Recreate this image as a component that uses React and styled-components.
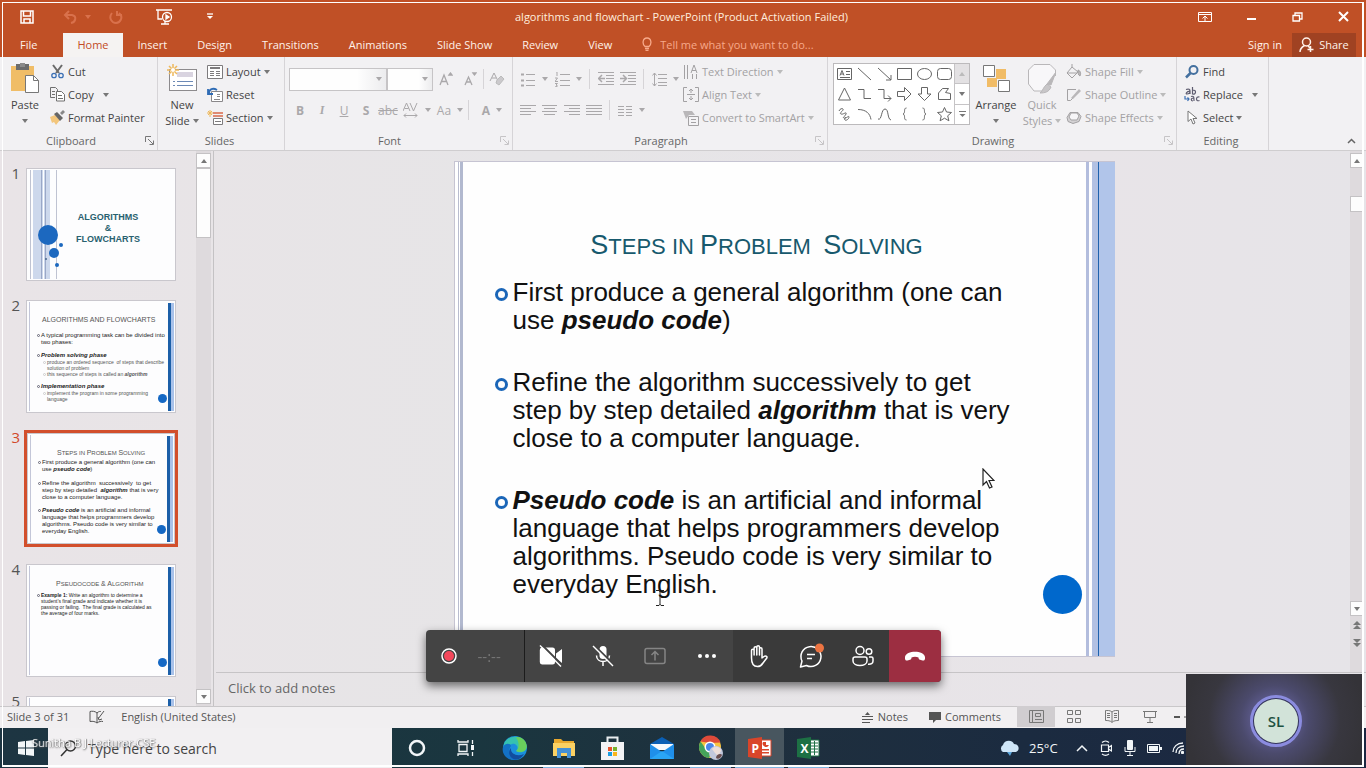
import React from "react";
import styled, { createGlobalStyle, css } from "styled-components";

const Global = createGlobalStyle`
  *, *::before, *::after { box-sizing: border-box; }
  html, body { margin: 0; height: 100%; overflow: hidden; }
  body { font-family: "Open Sans", "Noto Sans", sans-serif; font-size: 11px; color: #444; background: #e8e5e8; }
  button, input, select, textarea { font: inherit; color: inherit; margin: 0; padding: 0; border: 0; background: none; border-radius: 0; outline: 0; }
  button { white-space: nowrap; }
  svg { display: block; flex: none; }
`;

const Desktop = styled.div`
  display: flex;
  flex-direction: column;
  height: 100vh;
`;

const Ico = ({ w = 16, h = w, sw = 1, c = "currentColor", children }) => (
  <svg width={w} height={h} viewBox={`0 0 ${w} ${h}`} fill="none" stroke={c} strokeWidth={sw} aria-hidden="true">
    {children}
  </svg>
);
const Caret = ({ up }) => (
  <svg width="6" height="4" viewBox="0 0 6 4" fill="currentColor" aria-hidden="true">
    <path d={up ? "M0 4h6L3 0z" : "M0 0h6L3 4z"} />
  </svg>
);

/* ---------- title bar ---------- */

const TitleBar = styled.header`
  display: grid;
  grid-template-columns: 1fr auto 1fr;
  align-items: center;
  flex: none;
  height: 33px;
  padding: 0 17px 0 20px;
  background: #c05026;
  color: #fff;
`;
const QuickAccess = styled.div`
  display: flex;
  align-items: center;
`;
const QuickButton = styled.button`
  display: flex;
  align-items: center;
  gap: 8px;
  margin-right: ${(p) => p.$after || 0}px;
  color: ${(p) => (p.$dim ? "#d9714c" : "#fff")};
`;
const WindowButtons = styled.div`
  display: flex;
  justify-content: flex-end;
  align-items: center;
  gap: 35px;
`;
const DocTitle = styled.div`
  color: #ffeede;
  padding-right: 6px;
`;

/* ---------- tabs ---------- */

const TabBar = styled.nav`
  display: flex;
  flex: none;
  height: 24px;
  background: #c05026;
  color: #fff2ea;
  padding: 0 10px 0 5px;
`;
const Tab = styled.button`
  padding: 0 ${(p) => p.$pad || 15}px 2px;
  ${(p) =>
    p.$active &&
    css`
      background: #f5f3f2;
      color: #c34a25;
      padding: 0 14px 2px;
      margin-left: 11px;
    `}
`;
const TellMe = styled.button`
  display: flex;
  align-items: center;
  gap: 8px;
  margin-left: 15px;
  padding-bottom: 2px;
  color: #f7a98a;
`;
const Spacer = styled.div`
  flex: 1;
`;
const ShareButton = styled.button`
  display: flex;
  align-items: center;
  justify-content: center;
  gap: 4px;
  width: 64px;
  padding-bottom: 1px;
  background: #a04222;
`;

/* ---------- ribbon ---------- */

const Ribbon = styled.section`
  display: flex;
  flex: none;
  height: 94px;
  padding-left: 3px;
  background: #f2f1f3;
  border-bottom: 1px solid #cfcdcf;
`;
const GroupBox = styled.div`
  display: flex;
  flex-direction: column;
  flex: none;
  width: ${(p) => p.$w}px;
  padding-top: 3px;
  border-right: 1px solid #d6d4d7;
`;
const GroupBody = styled.div`
  display: flex;
  height: 69px;
  padding-left: ${(p) => p.$pad || 0}px;
`;
const GroupLabel = styled.div`
  display: flex;
  align-items: center;
  height: 18px;
  margin-top: 2px;
  padding-right: 3px;
  color: #666;
  span {
    flex: 1;
    padding-right: ${(p) => (p.$launcher ? 6 : 0)}px;
    text-align: center;
  }
`;
const Launcher = styled.button`
  width: 9px;
  color: ${(p) => (p.$dim ? "#c6c4c6" : "#777")};
`;
const Group = ({ w, pad, label, launcher, children }) => (
  <GroupBox $w={w}>
    <GroupBody $pad={pad}>{children}</GroupBody>
    <GroupLabel $launcher={launcher}>
      <span>{label}</span>
      {launcher && (
        <Launcher $dim={launcher === "dim"} aria-label={`${label} options`}>
          <Ico w={9}>
            <path d="M.5 6V.5H6M3 3l5 5M8.500 4.500v4h-4" />
          </Ico>
        </Launcher>
      )}
    </GroupLabel>
  </GroupBox>
);
const Stack = styled.div`
  display: flex;
  flex-direction: column;
  margin-left: ${(p) => p.$left || 0}px;
`;
const Command = styled.button`
  display: flex;
  align-items: center;
  height: 23px;
  gap: ${(p) => p.$gap || 3}px;
  color: ${(p) => (p.$dim ? "#a3a1a3" : "#444")};
`;
const CommandIcon = styled.span`
  display: flex;
  justify-content: center;
  width: 16px;
`;
const CaretBox = styled.span`
  margin-left: ${(p) => (p.$far ? 6 : 0)}px;
  color: ${(p) => (p.$dim ? "#bbb" : "#777")};
`;
const Cmd = ({ icon, text, caret, far, dim, gap }) => (
  <Command $dim={dim} $gap={gap}>
    <CommandIcon>{icon}</CommandIcon>
    {text}
    {caret && (
      <CaretBox $far={far} $dim={dim}>
        <Caret />
      </CaretBox>
    )}
  </Command>
);
const BigCommand = styled.button`
  display: flex;
  flex-direction: column;
  align-items: center;
  width: ${(p) => p.$w}px;
  line-height: 16px;
  color: ${(p) => (p.$dim ? "#a3a1a3" : "#444")};
`;
const BigIcon = styled.span`
  display: flex;
  align-items: center;
  height: 38px;
`;
const Inline = styled.span`
  display: flex;
  align-items: center;
  gap: 3px;
  height: 16px;
`;
const ToolColumn = styled.div`
  display: flex;
  flex-direction: column;
  gap: 7px;
  padding-top: 7px;
`;
const ToolRow = styled.div`
  display: flex;
  align-items: center;
  height: 24px;
  color: #aaa8aa;
`;
const Tool = styled.button`
  display: flex;
  align-items: center;
  justify-content: center;
  gap: ${(p) => (p.$caret ? 6 : 0)}px;
  width: ${(p) => p.$w || 22}px;
  font-size: 12px;
  font-weight: ${(p) => (p.$bold ? 700 : 400)};
  font-style: ${(p) => (p.$italic ? "italic" : "normal")};
  font-family: ${(p) => (p.$italic ? '"Liberation Serif", serif' : "inherit")};
  text-decoration: ${(p) => p.$deco || "none"};
`;
const ToolSep = styled.span`
  width: 1px;
  height: 20px;
  margin: 0 ${(p) => p.$m || 5}px;
  background: #d6d4d7;
`;
const Combo = styled.div`
  display: flex;
  align-items: center;
  width: ${(p) => p.$w}px;
  height: 23px;
  padding-right: 4px;
  background: linear-gradient(90deg, #fefefe 70%, #ececee);
  border: 1px solid #c6c4c6;
  select {
    flex: 1;
    min-width: 0;
    height: 21px;
    appearance: none;
  }
`;
const Gallery = styled.div`
  display: flex;
  width: 137px;
  height: 62px;
  margin-top: 3px;
  background: #fff;
  border: 1px solid #bcbabc;
`;
const ShapeGrid = styled.div`
  display: grid;
  grid-template-columns: repeat(6, 20px);
  grid-template-rows: repeat(3, 20px);
  flex: 1;
`;
const ShapeCell = styled.button`
  display: grid;
  place-items: center;
  color: #666;
`;
const GalleryScroll = styled.div`
  display: flex;
  flex-direction: column;
  width: 15px;
  border-left: 1px solid #c6c4c6;
  button {
    display: grid;
    place-items: center;
    flex: 1;
    color: #777;
  }
  button + button {
    border-top: 1px solid #c6c4c6;
  }
  button:first-child {
    background: #e3e1e3;
    color: #bbb;
  }
`;
const CollapseArea = styled.div`
  display: flex;
  flex: 1;
  justify-content: flex-end;
  align-items: flex-end;
  padding: 0 10px 6px 0;
  color: #666;
`;

/* ---------- workspace ---------- */

const Workspace = styled.main`
  display: flex;
  flex: 1;
  min-height: 0;
  background: linear-gradient(90deg, #e9e4e7, #e6e5e7 40%, #e8e4e8 80%, #e6e4e8);
`;
const ThumbPane = styled.aside`
  display: flex;
  flex: none;
  width: 214px;
  padding-left: 3px;
  border-right: 1px solid #c4c2c4;
`;
const ThumbList = styled.ol`
  flex: 1;
  display: flex;
  flex-direction: column;
  gap: 15px;
  margin: 0;
  padding: 15px 0 0 6px;
  list-style: none;
  overflow: hidden;
`;
const ThumbItem = styled.li`
  display: flex;
  flex: none;
  gap: 4px;
`;
const ThumbNumber = styled.span`
  width: 11px;
  text-align: right;
  font-size: 15px;
  line-height: 15px;
  color: ${(p) => (p.$active ? "#d2492a" : "#555")};
`;
const ThumbFrame = styled.button`
  width: 154px;
  height: 117px;
  padding: ${(p) => (p.$active ? 0 : 1)}px;
  border: ${(p) => (p.$active ? "3px solid #d24f2c" : "1px solid transparent")};
`;
const Thumb = styled.span`
  display: flex;
  width: 100%;
  height: 100%;
  background: #fdfdfe;
  border: 1px solid #c9c7cd;
  font-family: "Liberation Sans", Arial, sans-serif;
  color: #222;
  text-align: left;
  white-space: nowrap;
`;
const ThumbEdge = styled.span`
  width: 3px;
  margin: 1px 0;
  border-right: 1px solid #c3c6d8;
`;
const ThumbBody = styled.span`
  display: flex;
  flex-direction: column;
  flex: 1;
  min-width: 0;
  padding: ${(p) => p.$top}px 0 0 7px;
`;
const ThumbStripe = styled.span`
  width: 6px;
  margin: 2px 1px 1px 0;
  background: #a9c2ea;
  border-left: 3px solid #1c5fa8;
`;
const ThumbTitle = styled.span`
  font-size: 7px;
  line-height: 8px;
  margin: 0 0 ${(p) => p.$after || 5}px ${(p) => p.$indent || 5}px;
  color: #555;
  small {
    font-size: 6px;
  }
`;
const ThumbPara = styled.span`
  display: flex;
  gap: 1px;
  margin: 0 0 ${(p) => p.$after || 0}px ${(p) => (p.$sub ? 6 : 0)}px;
  font-size: ${(p) => (p.$small ? 5 : 6)}px;
  line-height: ${(p) => (p.$small ? 6 : 7)}px;
  color: ${(p) => (p.$sub ? "#555" : "#222")};
  white-space: pre;
  &::before {
    content: "";
    flex: none;
    width: 3px;
    height: 3px;
    margin-top: 2px;
    border: 1px solid ${(p) => (p.$sub ? "#ccc" : "#667")};
    border-radius: 50%;
  }
`;
const ThumbDot = styled.span`
  display: flex;
  align-items: flex-end;
  padding: 0 1px 9px 0;
  &::after {
    content: "";
    width: 9px;
    height: 9px;
    border-radius: 50%;
    background: #1568c4;
  }
`;
const CoverText = styled.span`
  flex: 1;
  align-self: center;
  display: flex;
  flex-direction: column;
  align-items: center;
  padding: 8px 30px 0 8px;
  font-size: 9px;
  line-height: 11px;
  font-weight: 700;
  color: #28616f;
`;
const ScrollTrack = styled.div`
  display: flex;
  flex-direction: column;
  align-items: center;
  flex: none;
  width: ${(p) => p.$w}px;
  margin-right: ${(p) => p.$right || 0}px;
  padding: 2px 0 ${(p) => p.$bottom || 2}px;
  background: #dedadd;
  color: #777;
`;
const ScrollButton = styled.button`
  display: grid;
  place-items: center;
  width: 100%;
  height: ${(p) => p.$h || 15}px;
  ${(p) =>
    !p.$plain &&
    css`
      background: #fdfdfd;
      border: 1px solid #c4c2c4;
    `}
`;
const ScrollThumb = styled.div`
  width: 100%;
  height: ${(p) => p.$h}px;
  margin-top: ${(p) => p.$top || 0}px;
  background: #fdfdfd;
  border: 1px solid #c4c2c4;
`;
const Editor = styled.section`
  display: flex;
  flex-direction: column;
  flex: 1;
  min-width: 0;
  margin-left: 2px;
`;
const CanvasRow = styled.div`
  display: flex;
  flex: 1;
  min-height: 0;
`;
const Canvas = styled.div`
  flex: 1;
  display: flex;
  justify-content: center;
  align-items: flex-start;
  padding: 10px 0 0 2px;
`;
const Slide = styled.article`
  display: flex;
  width: 661px;
  aspect-ratio: 4 / 3;
  background: #fefefe;
  border: 1px solid #c6c4d2;
  border-right: 0;
  font-family: "Liberation Sans", Arial, sans-serif;
  color: #111;
`;
const SlideEdge = styled.div`
  width: 8px;
  border-right: 3px solid #b2b9cf;
  background: linear-gradient(90deg, #fff 3px, #b9bdcf 3px, #b9bdcf 4px, #fff 4px);
`;
const SlideBody = styled.div`
  display: flex;
  flex-direction: column;
  flex: 1;
  padding: 67px 0 0 32px;
`;
const SlideTitle = styled.h1`
  margin: 0 24px 15px 0;
  text-align: center;
  font-size: 27px;
  line-height: 32px;
  font-weight: 400;
  color: #17596d;
  white-space: pre;
  small {
    font-size: 22px;
  }
`;
const Bullets = styled.ul`
  display: flex;
  flex-direction: column;
  gap: 34px;
  margin: 0;
  padding: 0;
  list-style: none;
`;
const Bullet = styled.li`
  display: flex;
  gap: 5px;
  font-size: 26px;
  line-height: 28px;
  white-space: nowrap;
  &::before {
    content: "";
    flex: none;
    width: 13px;
    height: 13px;
    margin-top: 10px;
    border: 3px solid #1b66b8;
    border-radius: 50%;
  }
`;
const DotColumn = styled.div`
  display: flex;
  align-items: flex-end;
  padding: 0 4px 42px 0;
  &::after {
    content: "";
    width: 39px;
    height: 39px;
    border-radius: 50%;
    background: #0068cc;
  }
`;
const SlideStripes = styled.div`
  display: flex;
  width: 29px;
  background: #fff;
  span:nth-child(1) { width: 3px; background: #b3bddd; margin-right: 3px; }
  span:nth-child(2) { width: 6px; background: #b2c1e3; }
  span:nth-child(3) { width: 1px; background: #1e62ae; }
  span:nth-child(4) { flex: 1; background: #b1c5ea; }
`;
const Notes = styled.textarea`
  flex: none;
  height: 34px;
  padding: 6px 12px;
  border-top: 1px solid #c6c4c6;
  font-size: 13px;
  line-height: 18px;
  resize: none;
  &::placeholder {
    color: #666;
    opacity: 1;
  }
`;

/* ---------- status bar ---------- */

const StatusBar = styled.footer`
  display: flex;
  align-items: center;
  flex: none;
  height: 22px;
  padding: 0 0 2px 7px;
  background: #f1eff1;
  border-top: 1px solid #c9c7c9;
  color: #555;
`;
const StatusItem = styled.button`
  display: flex;
  align-items: center;
  gap: ${(p) => p.$gap || 3}px;
  margin-right: ${(p) => p.$after || 0}px;
`;
const ViewButton = styled.button`
  display: grid;
  place-items: center;
  width: 38px;
  height: 21px;
  color: #777;
  background: ${(p) => (p.$active ? "#d0cdd0" : "none")};
`;
const TileSpace = styled.div`
  width: 180px;
`;

/* ---------- taskbar ---------- */

const Taskbar = styled.nav`
  display: flex;
  align-items: center;
  flex: none;
  height: 40px;
  padding-left: 3px;
  background: linear-gradient(90deg, #1d3542, #1a363f 35%, #1f303e 55%, #1b2b40 75%, #1c2742);
  color: #f2f6f8;
`;
const StartButton = styled.button`
  display: grid;
  place-items: center;
  width: 45px;
  height: 100%;
`;
const SearchBox = styled.label`
  display: flex;
  align-items: center;
  gap: 11px;
  width: 344px;
  height: 100%;
  padding-left: 12px;
  background: #f2f0f2;
  color: #333;
  font-size: 14px;
  input {
    flex: 1;
    min-width: 0;
  }
  input::placeholder {
    color: #444;
    opacity: 1;
  }
`;
const TaskButton = styled.button`
  display: grid;
  place-items: center;
  width: 49px;
  height: 40px;
  background-color: ${(p) => (p.$active ? "#48565f" : "transparent")};
  ${(p) =>
    p.$open &&
    css`
      background-image: linear-gradient(#7fb4e0, #7fb4e0);
      background-repeat: no-repeat;
      background-position: center bottom;
      background-size: ${p.$active ? 49 : 41}px 2px;
    `}
`;
const Tray = styled.div`
  display: flex;
  align-items: center;
  gap: 8px;
`;
const TrayIcon = styled.button`
  display: grid;
  place-items: center;
  width: ${(p) => p.$w || 16}px;
`;
const Temperature = styled.span`
  width: 37px;
  font-size: 13px;
`;

/* ---------- overlays ---------- */

const ShareFrame = styled.div`
  position: fixed;
  inset: 2px 2px 1px;
  border: 2px solid #fff;
  border-top-width: 1px;
  border-left-width: 1px;
  pointer-events: none;
`;
const MeetingDock = styled.div`
  position: fixed;
  left: 0;
  right: 0;
  bottom: 86px;
  display: flex;
  justify-content: center;
  pointer-events: none;
`;
const MeetingBar = styled.div`
  display: flex;
  height: 52px;
  border-radius: 4px;
  overflow: hidden;
  background: #444;
  color: #fff;
  box-shadow: 0 4px 10px rgba(0, 0, 0, 0.55);
  pointer-events: auto;
`;
const RecordStatus = styled.div`
  display: flex;
  align-items: center;
  gap: 21px;
  width: 99px;
  padding-left: 15px;
  border-right: 1px solid #1c1c1c;
  color: #777;
  font-size: 15px;
`;
const MeetingButton = styled.button`
  display: grid;
  place-items: center;
  width: 52px;
  background: ${(p) => ({ dark: "#3a3a3a", leave: "#9c2e41" })[p.$tone] || "#444"};
  color: ${(p) => (p.$dim ? "#858585" : "#fff")};
`;
const SelfTile = styled.div`
  position: fixed;
  right: 3px;
  bottom: 3px;
  display: grid;
  place-items: center;
  width: 177px;
  height: 91px;
  padding: 2px 0 0 3px;
  background: radial-gradient(circle at center, #5a5888 22px, #4b4a6c 34px, #38373f 66px, #343338 90px);
`;
const Avatar = styled.div`
  display: grid;
  place-items: center;
  width: 52px;
  height: 52px;
  border: 3px solid #8b8cdf;
  border-radius: 50%;
  background: #34345a;
  span {
    display: grid;
    place-items: center;
    width: 44px;
    height: 44px;
    border-radius: 50%;
    background: #d2e3d9;
    color: #1d5140;
    font-size: 15px;
    font-weight: 600;
  }
`;
const PresenterName = styled.div`
  position: fixed;
  left: 32px;
  bottom: 17px;
  line-height: 16px;
  color: #fff;
  opacity: 0.85;
  text-shadow: 0 1px 2px #555, 1px 0 1px #777;
  pointer-events: none;
`;
const Pointer = styled.div`
  position: fixed;
  left: ${(p) => p.$x}px;
  top: ${(p) => p.$y}px;
  pointer-events: none;
`;

/* ---------- ribbon drawings ---------- */

const lines = (xs, w, ys) => ys.map((y, i) => `M${xs[i % xs.length]} ${y}h${w[i % w.length]}`).join("");
const SHAPES = [
  ["Text box", <><path d="M.5 1.500h14v11h-14zM9 4.500h4M9 7.500h4M3 10.500h10" /><path d="M3 8.500l2-5 2 5M4 7h2.500" /></>],
  ["Line", <path d="M1 1l13 12" />],
  ["Arrow", <path d="M1 1l13 12M14 8v5H9" />],
  ["Rectangle", <path d="M.5 1.500h14v11h-14z" />],
  ["Oval", <ellipse cx="7.5" cy="7" rx="7" ry="5.500" />],
  ["Rounded rectangle", <rect x=".5" y="1.500" width="14" height="11" rx="3" />],
  ["Triangle", <path d="M7.500 1l6 12h-12z" />],
  ["Elbow connector", <path d="M1 2.500h6v9h7" />],
  ["Elbow arrow", <path d="M1 2.500h6v9h7M11 8.500l3 3-3 3" />],
  ["Right arrow", <path d="M.5 4.500h7v-4L14 7l-6.500 6.500v-4h-7z" />],
  ["Down arrow", <path d="M4.500.5h6V7H14l-6.500 6.500L1 7h3.500z" />],
  ["Freeform", <path d="M1.500 12.500V6l4-4.500h6l-3 4 5 1v6z" />],
  ["Scribble", <path d="M2 4c1-3 5-3 4-1S2 6 4 7s6-3 5 0-4 3-2 4 5-3 5-1-3 4-4 3 0-2 1-3" />],
  ["Arc", <path d="M1 2.500c8 0 12 4 13 10" />],
  ["Curve", <path d="M1 12C5 14 4 2 8 2s2 10 6 11" />],
  ["Left brace", <path d="M9.500 1C6 1 9 6 6 7c3 1 0 6 3.500 6" />],
  ["Right brace", <path d="M5.500 1C9 1 6 6 9 7c-3 1 0 6-3.500 6" />],
  ["Star", <path d="M7.500.5l2 4.500 5 .5-3.800 3.300 1.200 5-4.400-2.600-4.400 2.600 1.200-5L.5 5.500l5-.5z" />],
];

const ClipboardGroup = () => (
  <Group w={155} label="Clipboard" launcher="on">
    <BigCommand $w={44}>
      <BigIcon>
        <svg width="29" height="31" viewBox="0 0 29 31" aria-hidden="true">
          <path d="M0 3h23v25H0z" fill="#f0bd67" />
          <path d="M5 1h13v6H5z" fill="#6b6b6b" />
          <path d="M9 0h5v4H9z" fill="#8a8a8a" />
          <path d="M14.500 12.500h8l5 5v12h-13z" fill="#fff" stroke="#777" />
          <path d="M22.500 12.500v5h5" fill="none" stroke="#777" />
        </svg>
      </BigIcon>
      Paste
      <Inline><CaretBox><Caret /></CaretBox></Inline>
    </BigCommand>
    <Stack $left={2}>
      <Cmd text="Cut" icon={
        <Ico w={15} sw={2} c="#6a6a6a">
          <path d="M3 1l6 8M12 1L6 9" />
          <circle cx="4" cy="11.500" r="2.200" stroke="#3c70b5" strokeWidth="1.300" />
          <circle cx="11" cy="11.500" r="2.200" stroke="#3c70b5" strokeWidth="1.300" />
        </Ico>} />
      <Cmd text="Copy" caret far icon={
        <Ico w={15} c="#6f6f6f">
          <path d="M5 10.500H.5v-10h5l2 2v2M2 4.500h3M2 7.500h3" />
          <path d="M6.500 4.500h5l3 3v6.500h-8zM8 8.500h4M8 11.500h5" fill="#fff" />
        </Ico>} />
      <Cmd text="Format Painter" icon={
        <svg width="15" height="15" viewBox="0 0 15 15" aria-hidden="true">
          <path d="M0 7l5-2 5 5-4 5-2-3-2 1z" fill="#f3c67c" />
          <path d="M4 4l3-2 6 6-3 3z" fill="#666" />
          <path d="M10 3l3-3 2 2-3 3z" fill="#888" />
        </svg>} />
    </Stack>
  </Group>
);

const SlidesGroup = () => (
  <Group w={127} label="Slides">
    <BigCommand $w={48}>
      <BigIcon>
        <svg width="31" height="29" viewBox="0 0 31 29" aria-hidden="true">
          <rect x="2.500" y="5.500" width="27" height="21" fill="#fff" stroke="#8d8b8d" />
          <path d="M10 8h16v5H10z" fill="#d9d4e0" />
          <path d="M6 17.500h2m2 0h16M6 21.500h2m2 0h16" stroke="#6c89b5" />
          <path d="M6 0v12M0 6h12M2 2l8 8M10 2l-8 8" stroke="#eeb85b" strokeWidth="1.500" />
          <circle cx="6" cy="6" r="2" fill="#fff" />
        </svg>
      </BigIcon>
      New
      <Inline>Slide <CaretBox><Caret /></CaretBox></Inline>
    </BigCommand>
    <Stack $left={1}>
      <Cmd text="Layout" caret icon={
        <Ico w={16} c="#7d7b7d">
          <path d="M.5 1.500h15v13H.5z" fill="#fff" />
          <path d="M3 4h10" strokeWidth="2" />
          <path d="M3 7.500h4M3 9.500h4M3 11.500h4M9 7.500h4M9 9.500h4M9 11.500h4" />
        </Ico>} />
      <Cmd text="Reset" icon={
        <Ico w={16} c="#8a888a">
          <path d="M4.500 4.500h11v10h-11zM10 7.500h3M10 9.500h3M7 12.500h6" fill="#fff" />
          <path d="M2 6C2 2 6 .5 10 3M1 2v5h5" stroke="#2f6cb5" strokeWidth="1.800" />
        </Ico>} />
      <Cmd text="Section" caret icon={
        <Ico w={16} c="#7d7b7d">
          <path d="M6.500 8.500h9v6h-9zM8 11.500h6" fill="#fff" />
          <path d="M6 3h10M6 6h10" stroke="#d9684a" strokeWidth="1.500" />
          <path d="M3 0v7M0 3h6M1 1l4 4M5 1L1 5" stroke="#eeb85b" />
        </Ico>} />
    </Stack>
  </Group>
);

const FontGroup = () => (
  <Group w={228} pad={4} label="Font" launcher="dim">
    <ToolColumn>
      <ToolRow>
        <Combo $w={98}>
          <select aria-label="Font"><option /></select>
          <Caret />
        </Combo>
        <Combo $w={46}>
          <select aria-label="Font size"><option /></select>
          <Caret />
        </Combo>
        <Tool $w={26} aria-label="Increase font size">
          <Ico w={14} sw={1.300}><path d="M1 13L5 3l4 10M2.500 9.500h5" /><path d="M10 3l1.500-2L13 3z" fill="currentColor" /></Ico>
        </Tool>
        <Tool aria-label="Decrease font size">
          <Ico w={14} sw={1.300}><path d="M2 13l3.500-8L9 13M3.500 10h4" /><path d="M10 1l1.500 2L13 1z" fill="currentColor" /></Ico>
        </Tool>
        <ToolSep $m={2} />
        <Tool aria-label="Clear formatting">
          <Ico w={16}><path d="M1 10l4-8 4 8M3 7h4" /><path d="M8 9l4-4 3 3-5 6-3-2z" fill="#cbc9cc" stroke="#bbb" /></Ico>
        </Tool>
      </ToolRow>
      <ToolRow>
        <Tool $bold>B</Tool>
        <Tool $italic $bold>I</Tool>
        <Tool $deco="underline">U</Tool>
        <Tool $bold>S</Tool>
        <Tool $deco="line-through">abc</Tool>
        <Tool $w={35} $caret aria-label="Character spacing">
          <Ico w={16} h={16}><path d="M0 9l3.500-8L7 9M1.500 6.500h4M7 1l3.500 8L14 1M1 13.500h13M3 11.500l-2 2 2 2M12 11.500l2 2-2 2" /></Ico>
          <Caret />
        </Tool>
        <Tool $w={32} $caret>Aa<Caret /></Tool>
        <ToolSep $m={2} />
        <Tool $w={42} $caret $bold>A<Caret /></Tool>
      </ToolRow>
    </ToolColumn>
  </Group>
);

const ParagraphGroup = () => (
  <Group w={315} pad={4} label="Paragraph" launcher="dim">
    <ToolColumn>
      <ToolRow>
        <Tool $w={34} $caret aria-label="Bullets">
          <Ico w={15}><path d={lines([5], [9], [2.5, 8.5, 13.5])} /><path d={lines([0], [3], [2.5, 8.5, 13.5])} strokeWidth="2" /></Ico><Caret />
        </Tool>
        <Tool $w={34} $caret aria-label="Numbering">
          <Ico w={15}><path d={lines([5], [10], [2.5, 8.5, 13.5])} /><path d="M1 0l1-.5V4M0 6h2.500L0 9.500h3M0 11.500h2.500L1 13l1.500 1L0 15" /></Ico><Caret />
        </Tool>
        <ToolSep $m={4} />
        <Tool $w={24} aria-label="Decrease indent"><Ico w={16}><path d={lines([0, 8, 8, 8, 0], [16, 8, 8, 8, 16], [1.5, 4.5, 7.5, 10.5, 13.5])} /><path d="M7 7.500H1M4 4L.5 7.500 4 11" strokeWidth="1.500" /></Ico></Tool>
        <Tool $w={20} aria-label="Increase indent"><Ico w={16}><path d={lines([0, 8, 8, 8, 0], [16, 8, 8, 8, 16], [1.5, 4.5, 7.5, 10.5, 13.5])} /><path d="M0 7.500h6M3 4l3.500 3.500L3 11" strokeWidth="1.500" /></Ico></Tool>
        <ToolSep $m={5} />
        <Tool $w={32} $caret aria-label="Line spacing"><Ico w={15}><path d={lines([6], [9], [2.5, 6.5, 10.5, 13.5])} /><path d="M2.500 1v13M.5 3.500l2-2.500 2 2.500M.5 11.500l2 2.500 2-2.500" /></Ico><Caret /></Tool>
      </ToolRow>
      <ToolRow>
        {[["left", [0, 0], [16, 11]], ["center", [0, 2], [15, 11]], ["right", [0, 5], [16, 11]], ["justify", [0], [16]]].map(([n, xs, w]) => (
          <Tool key={n} aria-label={`Align ${n}`}><Ico w={16}><path d={lines(xs, w, [3.5, 6.5, 9.5, 12.5])} /></Ico></Tool>
        ))}
        <ToolSep $m={4} />
        <Tool $w={34} $caret aria-label="Columns"><Ico w={15}><path d={lines([0], [6], [3.5, 6.5, 9.5, 12.5]) + lines([8], [6], [3.5, 6.5, 9.5, 12.5])} /></Ico><Caret /></Tool>
      </ToolRow>
    </ToolColumn>
    <Stack $left={2}>
      <Cmd dim caret text="Text Direction" icon={<Ico w={16}><path d="M1.500 1v14M4.500 1v14M9.500 10v5M13.500 10v5M8 9l3-8 3 8M9 6.500h4" /></Ico>} />
      <Cmd dim caret text="Align Text" icon={<Ico w={16}><path d="M4 .5H.5v14H4M12 .5h3.500v14H12M8 2v4M6 4l2-2 2 2M4 7.500h8M8 9v4M6 11l2 2 2-2" /></Ico>} />
      <Cmd dim caret text="Convert to SmartArt" icon={<Ico w={16}><path d="M0 1h9l3 4H6L3 9z" fill="#b9b7b9" stroke="none" /><path d="M5.500 6.500h10v9h-10zM8 9.500h5M8 12.500h5" fill="#f4f3f5" /></Ico>} />
    </Stack>
  </Group>
);

const DrawingGroup = () => (
  <Group w={349} pad={5} label="Drawing" launcher="dim">
    <Gallery>
      <ShapeGrid>
        {SHAPES.map(([name, art]) => (
          <ShapeCell key={name} aria-label={name}><Ico w={15} h={15}>{art}</Ico></ShapeCell>
        ))}
      </ShapeGrid>
      <GalleryScroll>
        <button aria-label="Previous shapes"><Caret up /></button>
        <button aria-label="Next shapes"><Caret /></button>
        <button aria-label="More shapes"><Ico w={7} h={7}><path d="M0 .5h7" /><path d="M.5 3h6L3.500 6z" fill="currentColor" stroke="none" /></Ico></button>
      </GalleryScroll>
    </Gallery>
    <BigCommand $w={52}>
      <BigIcon>
        <Ico w={27} c="#777">
          <path d="M13 4h10v10h-9v8H4v-9h9z" fill="#f1bc66" stroke="none" />
          <path d="M.5.5h11v11H.5zM15.500 15.500h11v11h-11z" fill="#fff" />
        </Ico>
      </BigIcon>
      Arrange
      <Inline><CaretBox><Caret /></CaretBox></Inline>
    </BigCommand>
    <BigCommand $w={40} $dim>
      <BigIcon>
        <Ico w={28} h={30} c="#b9b7b9">
          <path d="M14 27H6L.5 20V6L6 .5h16L27.500 6v6" fill="#f8f7f9" />
          <path d="M28 8l-5 13-4-1z" fill="#b9b7b9" />
          <path d="M19 20l4 3c-2 5-6 6-11 6 3-2 3-6 7-9z" fill="#c8c6c8" />
        </Ico>
      </BigIcon>
      Quick
      <Inline>Styles <CaretBox $dim><Caret /></CaretBox></Inline>
    </BigCommand>
    <Stack $left={4}>
      <Cmd dim caret text="Shape Fill" icon={<Ico w={16}><path d="M6 3l6 5-6 6-5-5zM6 3V0M1 9h10" /><path d="M12 6c3 1 3 4 2 6-2-1-2-3-2-6z" fill="#b9b7b9" /></Ico>} />
      <Cmd dim caret text="Shape Outline" icon={<Ico w={16}><path d="M10 2.500H1.500v11h3l8-8" /><path d="M5 11l8-9 2 2-8 8z" fill="#b9b7b9" stroke="none" /></Ico>} />
      <Cmd dim caret text="Shape Effects" icon={<Ico w={16}><path d="M4 2.500h8l3 4-2 5-6 2-5-2-1-4z" fill="#d3d1d3" /><path d="M5 3h6l2 3-2 4-6 0-2-3z" fill="#f6f5f7" /></Ico>} />
    </Stack>
  </Group>
);

const EditingGroup = () => (
  <Group w={92} pad={7} label="Editing">
    <Stack>
      <Cmd text="Find" icon={<Ico w={14} sw={2} c="#44709f"><circle cx="8.500" cy="5" r="4" /><path d="M5.500 8L1 12.500" strokeWidth="2.500" /></Ico>} />
      <Cmd text="Replace" caret far icon={<Ico w={16} sw={1.200} c="#5f5d70"><path d="M2 2.500c3-1 4 0 4 1.500v3M6 4.500C3 4 1 7 3 7s3-1 3-2M8.500 0v7c4 1 4-5 0-3.500" /><path d="M1 9v3h4M3.500 10.500L5 12l-1.500 2" stroke="#3c70b5" /><path d="M7 9.500c3-1 3 1 3 4.500M10 11c-4 0-3 3-1 3M15.500 10c-4-1-4 5 0 3.500" /></Ico>} />
      <Cmd text="Select" caret icon={<Ico w={11} h={15} c="#777"><path d="M1 1v10.500L4 9l2 5 2-1-2-4.500h4z" fill="#fff" /></Ico>} />
    </Stack>
  </Group>
);

/* ---------- thumbnails ---------- */

const CoverThumb = () => (
  <Thumb>
    <svg width="36" height="111" viewBox="0 0 36 111" aria-hidden="true">
      <path d="M3.500 1v109M29.500 1v109" stroke="#bfc3d2" />
      <path d="M6 1h17v109H6z" fill="#cdd8ec" />
      <path d="M14.500 1v109M18.500 1v109" stroke="#9aa7c6" />
      <path d="M16.500 1v109" stroke="#fff" />
      <circle cx="21" cy="66" r="10" fill="#1c68bf" />
      <circle cx="27" cy="84" r="5" fill="#1c68bf" />
      <circle cx="34" cy="76" r="2" fill="#1c68bf" />
      <circle cx="30" cy="96" r="2" fill="#1c68bf" />
      <circle cx="19" cy="90" r="1" fill="#46678c" />
    </svg>
    <CoverText>
      <span>ALGORITHMS</span>
      <span>&amp;</span>
      <span>FLOWCHARTS</span>
    </CoverText>
  </Thumb>
);
const SlideThumb = ({ top, children }) => (
  <Thumb>
    <ThumbEdge />
    <ThumbBody $top={top}>{children}</ThumbBody>
    <ThumbDot />
    <ThumbStripe />
  </Thumb>
);
const THUMBS = [
  <CoverThumb />,
  <SlideThumb top={15}>
    <ThumbTitle $after={8}>ALGORITHMS AND FLOWCHARTS</ThumbTitle>
    <ThumbPara $after={6}>{"A typical programming task can be divided into\ntwo phases:"}</ThumbPara>
    <ThumbPara><b><i>Problem solving phase</i></b></ThumbPara>
    <ThumbPara $sub $small>{"produce an ordered sequence  of steps that describe\nsolution of problem"}</ThumbPara>
    <ThumbPara $sub $small $after={6}><span>this sequence of steps is called an <b><i>algorithm</i></b></span></ThumbPara>
    <ThumbPara><b><i>Implementation phase</i></b></ThumbPara>
    <ThumbPara $sub $small>{"implement the program in some programming\nlanguage"}</ThumbPara>
  </SlideThumb>,
  <SlideThumb top={15}>
    <ThumbTitle $indent={19} $after={2}>S<small>TEPS IN </small>P<small>ROBLEM </small>S<small>OLVING</small></ThumbTitle>
    <ThumbPara $after={7}><span>{"First produce a general algorithm (one can\nuse "}<b><i>pseudo code</i></b>)</span></ThumbPara>
    <ThumbPara $after={6}><span>{"Refine the algorithm  successively  to get\nstep by step detailed  "}<b><i>algorithm</i></b>{" that is very\nclose to a computer language."}</span></ThumbPara>
    <ThumbPara><span><b><i>Pseudo code</i></b>{" is an artificial and informal\nlanguage that helps programmers develop\nalgorithms. Pseudo code is very similar to\neveryday English."}</span></ThumbPara>
  </SlideThumb>,
  <SlideThumb top={15}>
    <ThumbTitle $indent={19} $after={4}>P<small>SEUDOCODE </small>&amp; A<small>LGORITHM</small></ThumbTitle>
    <ThumbPara $small><span><b>Example 1:</b>{" Write an algorithm to determine a\nstudent’s final grade and indicate whether it is\npassing or failing.  The final grade is calculated as\nthe average of four marks."}</span></ThumbPara>
  </SlideThumb>,
  <SlideThumb top={15} />,
];

const TABS = ["Insert", "Design", "Transitions", "Animations", "Slide Show", "Review", "View"];

const TASKS = [
  { name: "Cortana", art: <Ico w={18} sw={2.5}><circle cx="9" cy="9" r="7" /></Ico> },
  { name: "Task View", art: <Ico w={18} sw={1.3}><path d="M1 1v2h10V1M1 17v-2h10v2M2 5.500h8v7H2zM15.500 1v4M15.500 13v4" /><path d="M14 6h3v5h-3z" fill="currentColor" stroke="none" /></Ico> },
  { name: "Microsoft Edge", art: (
    <svg width="26" height="26" viewBox="0 0 26 26" aria-hidden="true">
      <circle cx="13" cy="13" r="12" fill="#1b8fdc" />
      <path d="M2 9C5 0 20-1 24 9c3 8-6 10-10 7 4-3 0-8-4-7S3 12 1.500 14z" fill="#35c2b0" />
      <path d="M14 2c7-1 12 6 10.500 11-1 4-7 5-10.500 3 4-3 3-9 0-14z" fill="#69cf5c" />
      <path d="M9 11c-4 5 0 12 6 13.500C6 27-1 19 1 12c2-4 7-4 8-1z" fill="#1371c4" />
      <path d="M9 13c-1 6 6 9 13 6-3 5-7 6-9 5.500-5-1-8-7-4-11.500z" fill="#124c9e" />
    </svg>) },
  { name: "File Explorer", open: true, art: (
    <svg width="22" height="20" viewBox="0 0 22 20" aria-hidden="true">
      <path d="M1 1h7l2 2h11v15H1z" fill="#e9a92e" />
      <path d="M0 5h22v13H0z" fill="#fbd163" />
      <path d="M4 10h14v10h-4v-5H8v5H4z" fill="#4490d6" />
    </svg>) },
  { name: "Microsoft Store", art: (
    <svg width="23" height="25" viewBox="0 0 23 25" aria-hidden="true">
      <path d="M6.500 8V1.500h10V8" fill="none" stroke="#e9edf0" strokeWidth="2" />
      <path d="M0 6h23v18H0z" fill="#f3f3f5" />
      <path d="M7 11h4v4H7z" fill="#e8532b" /><path d="M12 11h4v4h-4z" fill="#77b32c" />
      <path d="M7 16h4v4H7z" fill="#1b9de2" /><path d="M12 16h4v4h-4z" fill="#f9b51b" />
    </svg>) },
  { name: "Mail", art: (
    <svg width="24" height="24" viewBox="0 0 24 24" aria-hidden="true">
      <path d="M0 8l12-7 12 7v4H0z" fill="#0a5fb5" />
      <path d="M1 8h22v6H1z" fill="#f4f8fc" />
      <path d="M0 8l12 8 12-8v15H0z" fill="#1f8fea" />
      <path d="M0 23l12-8 12 8z" fill="#2aa5f5" />
    </svg>) },
  { name: "Google Chrome", open: true, art: (
    <svg width="26" height="26" viewBox="0 0 26 26" aria-hidden="true">
      <circle cx="12" cy="12" r="11" fill="#f6c340" />
      <path d="M2.500 6.500a11 11 0 0 1 20 1L12 8z" fill="#de4a3a" />
      <path d="M2.500 6.500A11 11 0 0 0 11 23l4-8-7-1z" fill="#44a35a" />
      <circle cx="12" cy="12" r="5.500" fill="#fff" /><circle cx="12" cy="12" r="4" fill="#4b86e8" />
      <circle cx="18" cy="18" r="7" fill="#c2c8dc" />
      <path d="M14 14c3-4 9-2 9 2l-3 5-3-3z" fill="#ecdeda" /><path d="M18 23c0-4 5-5 6-3-1 3-4 5-6 3z" fill="#6a4f50" />
    </svg>) },
  { name: "PowerPoint", open: true, active: true, art: (
    <svg width="24" height="22" viewBox="0 0 24 22" aria-hidden="true">
      <path d="M11 3h12v16H11z" fill="#fff" stroke="#d9452a" />
      <path d="M15 5h3v3h3a3 3 0 1 1-6-3zM14 12h7v1.500h-7zM14 15h7v1.500h-7z" fill="#d9452a" />
      <path d="M0 2l14-2v22L0 20z" fill="#d9452a" />
      <text x="3.500" y="15.500" fontFamily="Open Sans, sans-serif" fontWeight="700" fontSize="12" fill="#fff">P</text>
    </svg>) },
  { name: "Excel", open: true, art: (
    <svg width="24" height="22" viewBox="0 0 24 22" aria-hidden="true">
      <path d="M11 3h11v16H11z" fill="#fff" stroke="#1d7044" />
      <path d="M14 6h7M14 9h7M14 12h7M14 15h7M17.500 4v14" stroke="#1d7044" />
      <path d="M0 2l14-2v22L0 20z" fill="#1d7044" />
      <text x="3.500" y="15.500" fontFamily="Open Sans, sans-serif" fontWeight="700" fontSize="12" fill="#fff">X</text>
    </svg>) },
];

const MEETING = [
  { name: "Turn camera on", art: <Ico w={24} sw={1.5}><path d="M3 3.500h10.500A2.500 2.500 0 0 1 16 6v12a2.500 2.500 0 0 1-2.500 2.500H3A2.500 2.500 0 0 1 .8 18V6A2.500 2.500 0 0 1 3 3.500zM17 9.500l6-4.500v14l-6-4.500z" fill="currentColor" stroke="none" /><path d="M2.500.5l21 21" stroke="#444" strokeWidth="2" /><path d="M1 1.500l21 21" /></Ico> },
  { name: "Unmute", art: <Ico w={24} sw={1.5}><rect x="8.500" y="2" width="7" height="13" rx="3.500" fill="currentColor" stroke="none" /><path d="M5.500 11.500c0 8 13 8 13 0M12 17.500V22" /><path d="M3.500 1.500l20 20" stroke="#444" strokeWidth="2" /><path d="M2 2l20 20" /></Ico> },
  { name: "Share content", dim: true, art: <Ico w={24} sw={1.5}><rect x="2" y="4.500" width="20" height="15" rx="2" /><path d="M12 16.500V8M8.500 11L12 7.500l3.500 3.500" /></Ico> },
  { name: "More actions", art: <Ico w={20}><g fill="currentColor" stroke="none"><circle cx="3" cy="10" r="2" /><circle cx="10" cy="10" r="2" /><circle cx="17" cy="10" r="2" /></g></Ico> },
  { name: "Raise hand", tone: "dark", art: <Ico w={24} sw={1.5}><path d="M4.500 14V6.500a1.200 1.200 0 0 1 2.600 0V11 4a1.300 1.300 0 0 1 2.700 0v7-8a1.300 1.300 0 0 1 2.700 0v8-6a1.200 1.200 0 0 1 2.500 0v9l2-1.500c1.500-1 3.500 0 3 1.300L16 19c-1.500 2.500-3 3.500-5.500 3.500-4 0-6-3-6-8.500z" strokeLinejoin="round" /></Ico> },
  { name: "Conversation", tone: "dark", art: <Ico w={28} sw={1.5}><path d="M3.500 25l1.500-6a10 10 0 1 1 4.500 4.500z" strokeLinejoin="round" /><path d="M10 12.500h8M10 16.500h5" /><circle cx="22.500" cy="6" r="4.500" fill="#ec7442" stroke="none" /></Ico> },
  { name: "Participants", tone: "dark", art: <Ico w={24} sw={1.5}><circle cx="9" cy="6.500" r="4" /><circle cx="18" cy="7.500" r="2.800" /><path d="M4 13h10a2 2 0 0 1 2 2v2c0 6-14 6-14 0v-2a2 2 0 0 1 2-2zM18 13h2.500a1.500 1.500 0 0 1 1.500 1.500V17c0 2.500-2 3.500-5 3.200" /></Ico> },
  { name: "Leave", tone: "leave", art: <svg width="22" height="12" viewBox="0 0 22 12" fill="#fff" aria-hidden="true"><path d="M1 7C2 0 20 0 21 7c.4 3-1 4-2.500 3.500l-2.500-.7c-1-.3-1.500-1-1.500-2.200-2-1-5-1-7 0 0 1.200-.5 1.900-1.500 2.200l-2.500.7C2 11 .6 10 1 7z" /></svg> },
];

export default function App() {
  return (
    <>
      <Global />
      <Desktop>
        <TitleBar>
          <QuickAccess>
            <QuickButton $after={29} aria-label="Save">
              <Ico w={14} sw={1.5}><path d="M1 1h12v12H1zM3.500 1v5h7V1M4 13V9h6v4" /></Ico>
            </QuickButton>
            <QuickButton $dim $after={18} aria-label="Undo">
              <Ico w={14} sw={2}><path d="M3 5h6c5 1 4 7-1 8M6 1L2 5l4 4" /></Ico><Caret />
            </QuickButton>
            <QuickButton $dim $after={33} aria-label="Redo">
              <Ico w={14} sw={2}><path d="M10 3c5 4 1 10-3 10S-1 8 3 3M8 1v4h5" /></Ico>
            </QuickButton>
            <QuickButton $after={34} aria-label="Start from beginning">
              <Ico w={17} h={16} sw={1.3}><path d="M0 1h16M2 1v9h4M9 12v3M5 15h8" /><circle cx="11" cy="8" r="4.500" /><path d="M10 6l3 2-3 2z" fill="currentColor" /></Ico>
            </QuickButton>
            <QuickButton aria-label="Customize toolbar">
              <Ico w={6} h={7} sw={1.3}><path d="M0 1h6" /><path d="M0 3h6L3 6z" fill="currentColor" stroke="none" /></Ico>
            </QuickButton>
          </QuickAccess>
          <DocTitle>algorithms and flowchart - PowerPoint (Product Activation Failed)</DocTitle>
          <WindowButtons>
            <QuickButton aria-label="Ribbon display options"><Ico w={14} h={12}><path d="M.5 1.500h13v9H.5zM.5 3.500h13M7 10V5.500M4.500 7.500L7 5l2.500 2.500" /></Ico></QuickButton>
            <QuickButton aria-label="Minimize"><Ico w={10} h={10} sw={2}><path d="M0 7h9" /></Ico></QuickButton>
            <QuickButton aria-label="Restore"><Ico w={11} h={10} sw={1.3}><path d="M1 3.500h6.500v5.500H1zM3 3V1h7v6H8" /></Ico></QuickButton>
            <QuickButton aria-label="Close"><Ico w={11} sw={2}><path d="M1 1l9 9M10 1l-9 9" /></Ico></QuickButton>
          </WindowButtons>
        </TitleBar>

        <TabBar>
          <Tab>File</Tab>
          <Tab $active>Home</Tab>
          {TABS.map((t) => <Tab key={t}>{t}</Tab>)}
          <TellMe>
            <Ico w={10} h={14} sw={1.3}><path d="M3 9.500C0 7 .5 1 5 1s5 6 2 8.500zM3 11.500h4M3.500 13.500h3" /></Ico>
            Tell me what you want to do...
          </TellMe>
          <Spacer />
          <Tab $pad={10}>Sign in</Tab>
          <ShareButton>
            <Ico w={16} sw={1.5}><circle cx="7.500" cy="5" r="4" /><path d="M1 15c0-3 2-5 4.500-6.500M9 9l2 2M11.500 9v6M8.500 12.500h6" /></Ico>
            Share
          </ShareButton>
        </TabBar>

        <Ribbon>
          <ClipboardGroup />
          <SlidesGroup />
          <FontGroup />
          <ParagraphGroup />
          <DrawingGroup />
          <EditingGroup />
          <CollapseArea>
            <button aria-label="Collapse the ribbon"><Ico w={9} h={6} sw={1.5}><path d="M1 5l3.500-3.500L8 5" /></Ico></button>
          </CollapseArea>
        </Ribbon>

        <Workspace>
          <ThumbPane>
            <ThumbList>
              {THUMBS.map((t, i) => (
                <ThumbItem key={i}>
                  <ThumbNumber $active={i === 2}>{i + 1}</ThumbNumber>
                  <ThumbFrame $active={i === 2} aria-label={`Slide ${i + 1}`}>{t}</ThumbFrame>
                </ThumbItem>
              ))}
            </ThumbList>
            <ScrollTrack $w={15} $right={2}>
              <ScrollButton aria-label="Scroll up"><Caret up /></ScrollButton>
              <ScrollThumb $h={70} />
              <Spacer />
              <ScrollButton aria-label="Scroll down"><Caret /></ScrollButton>
            </ScrollTrack>
          </ThumbPane>
          <Editor>
            <CanvasRow>
              <Canvas>
                <Slide>
                  <SlideEdge />
                  <SlideBody>
                    <SlideTitle>
                      S<small>TEPS IN </small>P<small>ROBLEM  </small>S<small>OLVING</small>
                    </SlideTitle>
                    <Bullets>
                      <Bullet><span>First produce a general algorithm (one can<br />use <b><i>pseudo code</i></b>)</span></Bullet>
                      <Bullet><span>Refine the algorithm successively to get<br />step by step detailed <b><i>algorithm</i></b> that is very<br />close to a computer language.</span></Bullet>
                      <Bullet><span><b><i>Pseudo code</i></b> is an artificial and informal<br />language that helps programmers develop<br />algorithms. Pseudo code is very similar to<br />everyday English.</span></Bullet>
                    </Bullets>
                  </SlideBody>
                  <DotColumn />
                  <SlideStripes><span /><span /><span /><span /></SlideStripes>
                </Slide>
              </Canvas>
              <ScrollTrack $w={13} $right={3} $bottom={20}>
                <ScrollButton aria-label="Scroll up"><Caret up /></ScrollButton>
                <ScrollThumb $h={16} $top={28} />
                <Spacer />
                <ScrollButton aria-label="Scroll down"><Caret /></ScrollButton>
                <ScrollButton $plain $h={18} aria-label="Previous slide"><Ico w={8}><path d="M0 4h8L4 0zM0 8h8L4 4z" fill="currentColor" stroke="none" /></Ico></ScrollButton>
                <ScrollButton $plain $h={18} aria-label="Next slide"><Ico w={8}><path d="M0 0h8L4 4zM0 4h8L4 8z" fill="currentColor" stroke="none" /></Ico></ScrollButton>
              </ScrollTrack>
            </CanvasRow>
            <Notes aria-label="Notes" placeholder="Click to add notes" />
          </Editor>
        </Workspace>

        <StatusBar>
          <StatusItem $after={20}>Slide 3 of 31</StatusItem>
          <StatusItem $after={16} aria-label="Spelling"><Ico w={16} h={14}><path d="M8 3C6 1 3 1 1 1.500v10c3-.5 5 0 7 1.500V3c2-2 3-1.500 4-1.500M8 13c2-1.500 4-2 6-1.500M9 9l6-8M9 7l1 3 3-1" /></Ico></StatusItem>
          <StatusItem>English (United States)</StatusItem>
          <Spacer />
          <StatusItem $after={21} $gap={5}><Ico w={11} h={12}><path d="M0 5.500h11M0 8.500h11M0 11.500h8" /><path d="M3 4l2.500-3L8 4z" fill="currentColor" stroke="none" /></Ico>Notes</StatusItem>
          <StatusItem $after={16} $gap={4}><Ico w={12}><path d="M0 1h12v8H7l-3 3V9H0z" fill="currentColor" stroke="none" /></Ico>Comments</StatusItem>
          <ViewButton $active aria-label="Normal view"><Ico w={15} h={13}><path d="M.5.5h14v12H.5zM3.500 1v12M6.500 3.500h5v3h-5zM6 9.500h7" /></Ico></ViewButton>
          <ViewButton aria-label="Slide sorter"><Ico w={14} h={13}><path d="M.5.5h5v4h-5zM8.500.5h5v4h-5zM.5 8.500h5v4h-5zM8.500 8.500h5v4h-5z" /></Ico></ViewButton>
          <ViewButton aria-label="Reading view"><Ico w={14} h={13}><path d="M7 2C5 0 2 .5.5.500v10c2 0 5 0 6.500 2 1.500-2 4.500-2 6.500-2V.5C12 .5 9 0 7 2zM7 2v10M2 3.500h3M2 5.500h3M2 7.500h3M9 3.500h3M9 5.500h3M9 7.500h3" /></Ico></ViewButton>
          <ViewButton aria-label="Slide show"><Ico w={14} h={13}><path d="M0 1.500h14M1.500 2v5.500h11V2M7 8v4M4 12.500h6" /></Ico></ViewButton>
          <StatusItem aria-label="Zoom out"><Ico w={17} h={4}><path d="M5 2h6" strokeWidth="2" /><path d="M15 2h2" /></Ico></StatusItem>
          <TileSpace />
        </StatusBar>

        <Taskbar>
          <StartButton aria-label="Start"><Ico w={16}><path d="M0 2l7-1v6.500H0zM8 1l8-1v7.500H8zM0 8.500h7V15l-7-1zM8 8.500h8V16l-8-1z" fill="currentColor" stroke="none" /></Ico></StartButton>
          <SearchBox>
            <Ico w={17} sw={1.5}><circle cx="10.500" cy="6" r="5" /><path d="M7 9.500L1 16" /></Ico>
            <input type="text" aria-label="Search" placeholder="Type here to search" />
          </SearchBox>
          {TASKS.map((t) => (
            <TaskButton key={t.name} aria-label={t.name} $open={t.open} $active={t.active}>{t.art}</TaskButton>
          ))}
          <Spacer />
          <Tray>
            <TrayIcon $w={24} aria-label="Weather"><Ico w={21} h={16}><path d="M4 12a4 4 0 0 1 0-7c1-5 9-6 11-1 6 0 6 8 1 8z" fill="#cfe6f8" stroke="none" /><path d="M8 12h5l-2 4z" fill="#5ea7dc" stroke="none" /></Ico></TrayIcon>
            <Temperature>25°C</Temperature>
            <TrayIcon aria-label="Show hidden icons"><Ico w={12} h={8} sw={1.5}><path d="M1 7l5-5 5 5" /></Ico></TrayIcon>
            <TrayIcon aria-label="Meet now"><Ico w={12} h={16} sw={1.2}><path d="M1.500 5h7v6.500h-7zM8.500 7.500l3-2v5.500l-3-2M2 2.500C4 .5 7 .5 9 2.500M2 14c2 1.500 5 1.500 7 0" /></Ico></TrayIcon>
            <TrayIcon aria-label="Microphone"><Ico w={12} h={16}><rect x="3" y="0" width="6" height="10" rx="1" fill="currentColor" stroke="none" /><path d="M1 7v4.500h10V7M6 12v3.500M3 15.500h6" /></Ico></TrayIcon>
            <TrayIcon aria-label="Battery"><Ico w={15} h={9}><path d="M.5.5h12v8H.5z" /><path d="M2 2h9v5H2zM13 3h2v3h-2z" fill="currentColor" stroke="none" /></Ico></TrayIcon>
            <TrayIcon aria-label="Wi-Fi"><Ico w={12} sw={1.3}><path d="M1 10C1 5 5 1 11 1M4 11c0-4 3-7 8-7M7 12c0-3 2-5 5-5" /><circle cx="10.500" cy="10.500" r="1" fill="currentColor" /></Ico></TrayIcon>
          </Tray>
          <TileSpace />
        </Taskbar>
      </Desktop>

      <Pointer $x={982} $y={468}>
        <Ico w={13} h={21} sw={1.2} c="#222"><path d="M1 1v16l3.500-3.500L7.500 20l2.500-1-3-6.500h5z" fill="#fff" /></Ico>
      </Pointer>
      <Pointer $x={656} $y={590}>
        <Ico w={8} h={16} c="#222"><path d="M0 .5h3l1 1 1-1h3M4 1v14M0 15.500h3l1-1 1 1h3" /></Ico>
      </Pointer>

      <MeetingDock>
        <MeetingBar>
          <RecordStatus>
            <Ico w={16} sw={1.5} c="#fff"><circle cx="8" cy="8" r="7" /><circle cx="8" cy="8" r="5" fill="#f4475b" stroke="none" /></Ico>
            --:--
          </RecordStatus>
          {MEETING.map((m) => (
            <MeetingButton key={m.name} aria-label={m.name} $tone={m.tone} $dim={m.dim}>{m.art}</MeetingButton>
          ))}
        </MeetingBar>
      </MeetingDock>

      <SelfTile><Avatar><span>SL</span></Avatar></SelfTile>
      <PresenterName>Sunitha B J Lecturer-CSE</PresenterName>
      <ShareFrame />
    </>
  );
}
